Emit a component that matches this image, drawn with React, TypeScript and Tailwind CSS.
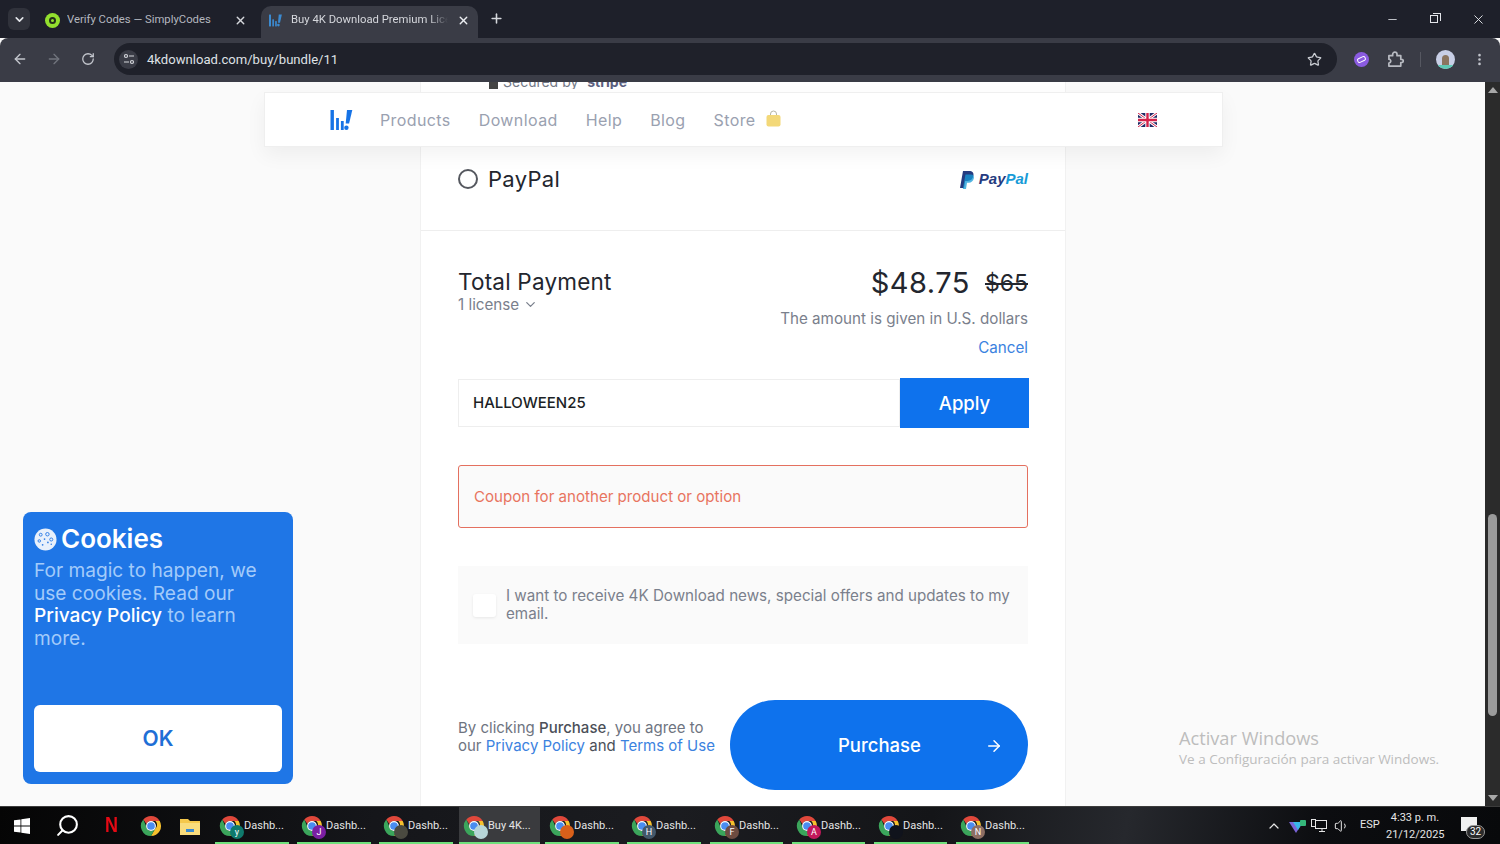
import { ArrowLeft, ArrowRight, ChevronDown, ChevronUp, Minus, MoreVertical, Plus, RotateCw, Search, Star, Volume1, X } from 'lucide-react';

const taskItems = [
    { label: 'Dashb...', badge: 'y', color: 'bg-[#0f7a6c]', ml: 'ml-0', w: 'w-[74px]' },
    { label: 'Dashb...', badge: 'J', color: 'bg-[#7b1fa2]', ml: 'ml-[8px]', w: 'w-[74px]' },
    { label: 'Dashb...', badge: '', color: 'bg-[#4a4a40]', ml: 'ml-[8px]', w: 'w-[74px]' },
    { label: 'Buy 4K...', badge: '', color: 'bg-[#b7d6d8]', ml: 'ml-[6px]', w: 'w-[81px]', active: true },
    { label: 'Dashb...', badge: '', color: 'bg-[#d9601a]', ml: 'ml-[5px]', w: 'w-[74px]' },
    { label: 'Dashb...', badge: 'H', color: 'bg-[#43586b]', ml: 'ml-[8px]', w: 'w-[74px]' },
    { label: 'Dashb...', badge: 'F', color: 'bg-[#6d4c41]', ml: 'ml-[9px]', w: 'w-[73px]' },
    { label: 'Dashb...', badge: 'A', color: 'bg-[#c2185b]', ml: 'ml-[9px]', w: 'w-[73px]' },
    { label: 'Dashb...', badge: '', color: 'bg-[#10131c]', ml: 'ml-[9px]', w: 'w-[73px]' },
    { label: 'Dashb...', badge: 'N', color: 'bg-[#8d6e63]', ml: 'ml-[9px]', w: 'w-[73px]' },
];

function ChromeIcon({ className }: { className?: string }) {
    return (
        <svg viewBox="0 0 24 24" className={className}>
            <path d="M12 1a11 11 0 0 1 9.500 5.500H12a5.500 5.500 0 0 0-5 3.200L3.600 4.900A11 11 0 0 1 12 1z" fill="#e0483b" />
            <path d="M21.500 6.500A11 11 0 0 1 12 23l4.700-8.200a5.500 5.500 0 0 0 0-8.300z" fill="#f6c02d" />
            <path d="M12 23A11 11 0 0 1 3.600 4.900L7.900 15a5.500 5.500 0 0 0 4.500 2.500l4.300-2.700z" fill="#3ba55b" />
            <circle cx="12" cy="12" r="5.400" fill="#fff" />
            <circle cx="12" cy="12" r="4.200" fill="#4a8df0" />
        </svg>
    );
}

function LogoBars({ className, fill }: { className?: string; fill: string }) {
    return (
        <svg viewBox="0 0 22 20" className={className} fill={fill}>
            <rect x="0" y="0" width="3.400" height="20" />
            <rect x="5.600" y="8" width="2.800" height="12" />
            <rect x="10.400" y="11" width="2.800" height="9" />
            <path d="M16.500 0h5.300l-3.200 13.600h-3.400z" />
            <circle cx="15.900" cy="17.800" r="2.200" />
        </svg>
    );
}

function UkFlag() {
    return (
        <svg viewBox="0 0 19 14" className="h-[14px] w-[19px]">
            <rect width="19" height="14" fill="#1f2a66" />
            <path d="M0 0l19 14M19 0L0 14" stroke="#fff" strokeWidth="3" />
            <path d="M0 0l19 14M19 0L0 14" stroke="#d3224a" strokeWidth="1" />
            <path d="M9.500 0v14M0 7h19" stroke="#fff" strokeWidth="4.400" />
            <path d="M9.500 0v14M0 7h19" stroke="#d3224a" strokeWidth="2.400" />
        </svg>
    );
}

function CookieIcon() {
    return (
        <svg viewBox="0 0 24 24" className="h-[23px] w-[23px]">
            <circle cx="12" cy="12" r="11.500" fill="#e8f0fb" />
            <g fill="none" stroke="#2f7de6" strokeWidth="1">
                <circle cx="7" cy="7" r="1.500" />
                <circle cx="14" cy="6.500" r="1.800" />
                <circle cx="18" cy="12" r="1.600" />
                <circle cx="5.500" cy="13.500" r="1.300" />
            </g>
            <g fill="#2f7de6">
                <circle cx="11" cy="11.500" r="0.900" />
                <circle cx="14.500" cy="15" r="0.900" />
                <circle cx="9" cy="17.500" r="0.900" />
                <circle cx="18" cy="17" r="0.800" />
            </g>
        </svg>
    );
}

function TabStrip() {
    return (
        <div className="flex h-[38px] shrink-0 items-end bg-[#1e202a] font-['Roboto',sans-serif] text-[11.3px]">
            <div className="mb-[8px] ml-[8px] flex h-[22px] w-[22px] items-center justify-center rounded-md bg-[#30323b] text-[#e3e5ea]">
                <ChevronDown size={13} strokeWidth={3} />
            </div>
            <div className="flex h-[32px] w-[231px] items-center pb-[4px] pl-[15px] text-[#b4b7bf]">
                <div className="flex h-[15px] w-[15px] items-center justify-center rounded-full bg-[#93e02e]">
                    <div className="h-[7px] w-[7px] rounded-full border-2 border-[#23301a]" />
                </div>
                <span className="ml-[7px] w-[167px] truncate">Verify Codes — SimplyCodes</span>
                <X size={13} strokeWidth={2.500} className="text-[#d5d7dc]" />
            </div>
            <div className="flex h-[32px] w-[217px] items-center rounded-t-[10px] bg-[#3a3c46] pb-[4px] pl-[8px] text-[#d5d7dc]">
                <LogoBars fill="#3b8ad0" className="h-[13px] w-[13px]" />
                <span className="ml-[9px] w-[157px] overflow-hidden whitespace-nowrap [mask-image:linear-gradient(to_right,black_88%,transparent)]">Buy 4K Download Premium Licence</span>
                <X size={13} strokeWidth={2.500} className="ml-[9px] text-[#eceef1]" />
            </div>
            <Plus size={15} strokeWidth={2.500} className="mb-[12px] ml-[11px] text-[#d5d7dc]" />
            <div className="mb-[7px] ml-auto flex h-[24px] items-center text-[#e3e5ea]">
                <div className="flex w-[43px] justify-center">
                    <Minus size={13} strokeWidth={1.500} />
                </div>
                <div className="relative flex w-[43px] justify-center">
                    <div className="mr-[3px] h-[8px] w-[8px] border border-[#e3e5ea]" />
                    <div className="absolute -top-[2px] left-[19px] h-[8px] w-[8px] border-r border-t border-[#e3e5ea]" />
                </div>
                <div className="flex w-[43px] justify-center">
                    <X size={15} strokeWidth={1.500} />
                </div>
            </div>
        </div>
    );
}

function Toolbar() {
    return (
        <div className="flex h-[44px] shrink-0 items-center rounded-t-[8px] bg-[#3a3c46] pb-[2px] font-['Roboto',sans-serif]">
            <ArrowLeft size={16} strokeWidth={2} className="ml-[12px] text-[#c3c6cd]" />
            <ArrowRight size={16} strokeWidth={2} className="ml-[18px] text-[#71747d]" />
            <RotateCw size={14} strokeWidth={2.200} className="ml-[19px] text-[#c3c6cd]" />
            <div className="ml-[19px] flex h-[32px] w-[1223px] items-center rounded-full bg-[#1f212a] pl-[5px] pr-[15px]">
                <div className="flex h-[19px] w-[19px] items-center justify-center rounded-full bg-[#3a3c46]">
                    <svg viewBox="0 0 12 12" className="h-[12px] w-[12px]" fill="none" stroke="#d5d7dc" strokeWidth="1.200">
                        <circle cx="3" cy="3" r="1.500" />
                        <path d="M6 3h5M1 9h5" />
                        <circle cx="9" cy="9" r="1.500" />
                    </svg>
                </div>
                <span className="ml-[9px] pt-[1px] text-[13.1px] text-[#dfe1e6]">4kdownload.com/buy/bundle/11</span>
                <Star size={15} strokeWidth={2} className="ml-auto text-[#c9ccd2]" />
            </div>
            <div className="ml-[17px] flex h-[15px] w-[15px] items-center justify-center rounded-full bg-[#8a5be0]">
                <div className="h-[5px] w-[9px] -rotate-[25deg] rounded-[2px] border border-white" />
            </div>
            <svg viewBox="0 0 18 18" className="ml-[18px] h-[17px] w-[17px]" fill="none" stroke="#b8bbc2" strokeWidth="1.800" strokeLinejoin="round">
                <path d="M2 5h4V3.500a2.300 2.300 0 0 1 4.600 0V5h4v3.800h.9a1.700 1.700 0 0 1 0 3.400h-.9V16H2v-3.300a2 2 0 0 0 0-4z" />
            </svg>
            <div className="ml-[16px] h-[15px] w-px bg-[#565861]" />
            <div className="relative ml-[15px] flex h-[19px] w-[19px] items-end justify-center overflow-hidden rounded-full bg-[#c8cfe6]">
                <div className="mb-[2px] h-[12px] w-[7px] rounded-t-full bg-[#8a7560]" />
                <div className="absolute bottom-0 h-[4px] w-[19px] bg-[#5fc9b5]" />
            </div>
            <MoreVertical size={15} strokeWidth={2.200} className="ml-[17px] text-[#c3c6cd]" />
        </div>
    );
}

function SiteHeader() {
    return (
        <div className="absolute left-[264px] top-[10px] flex h-[55px] w-[959px] items-center border border-[#efefef] bg-white pl-[65px] pr-[65px] text-[16px] tracking-[0.4px] text-[#9aa1b0] shadow-[0_8px_20px_rgba(0,0,0,0.05)]">
            <LogoBars fill="#1673e6" className="h-[20px] w-[23px]" />
            <div className="ml-[27px] flex items-center gap-[28px] pt-[1px]">
                <span>Products</span>
                <span>Download</span>
                <span>Help</span>
                <span>Blog</span>
                <span className="flex items-center">
                    Store
                    <svg viewBox="0 0 15 17" className="mb-[3px] ml-[10px] h-[17px] w-[15px]">
                        <path d="M4.500 6V4a3 3 0 0 1 6 0v2" fill="none" stroke="#b5b5a5" strokeWidth="1" />
                        <rect x="0.500" y="5" width="14" height="11.500" rx="2" fill="#f3d878" />
                    </svg>
                </span>
            </div>
            <div className="ml-auto">
                <UkFlag />
            </div>
        </div>
    );
}

function CookieBanner() {
    return (
        <div className="absolute left-[23px] top-[430px] flex h-[272px] w-[270px] flex-col rounded-lg bg-[#1f76e6] px-[11px] pb-[12px] pt-[11px]">
            <div className="flex items-center gap-[4px] text-[26px] font-semibold leading-[32px] text-white">
                <CookieIcon />
                Cookies
            </div>
            <p className="mt-[4px] text-[19.100px] leading-[22.500px] text-[#a3cbfa]">
                For magic to happen, we use cookies. Read our <span className="font-medium text-white">Privacy Policy</span> to learn more.
            </p>
            <div className="mt-auto flex h-[67px] items-center justify-center rounded-md bg-white text-[21px] font-semibold text-[#1f6fd6]">OK</div>
        </div>
    );
}

function Checkout() {
    return (
        <div className="ml-[420px] h-full w-[646px] overflow-hidden border-x border-[#f1f1f1] bg-white">
            <div className="h-[149px] border-b border-[#eeeeee] px-[37px]">
                <div className="flex h-[7px] items-start overflow-hidden pl-[31px] text-[14px] leading-[14px] text-[#747a88]">
                    <span className="mr-[5px] h-[7px] w-[9px] shrink-0 bg-[#444]" />
                    <span className="-mt-[7px]">Secured by <b className="ml-[5px] text-[#5b5f80]">stripe</b></span>
                </div>
                <div className="mt-[78px] flex h-[24px] items-center">
                    <div className="h-[20px] w-[20px] rounded-full border-2 border-[#55585f]" />
                    <span className="ml-[10px] text-[22px] tracking-[0.3px] text-[#23262e]">PayPal</span>
                    <span className="ml-auto flex items-center pt-[1px] font-['Liberation_Sans',sans-serif] text-[15px] font-bold italic">
                        <svg viewBox="0 0 14 18" className="mr-[5px] h-[18px] w-[14px]">
                            <path d="M3 0h6c3.500 0 5 2 4.400 4.800C12.700 8.200 10.500 10 7.500 10H5.200L4 17H0z" fill="#253b80" />
                            <path d="M5.500 3.500h5.500c2.500 0 3.300 1.800 2.800 4-.6 2.700-2.600 4.200-5 4.200H7L6 18H2.800z" fill="#179bd7" opacity="0.750" />
                        </svg>
                        <span className="text-[#253b80]">Pay</span>
                        <span className="text-[#179bd7]">Pal</span>
                    </span>
                </div>
            </div>
            <div className="px-[37px] pt-[31px]">
                <div className="flex justify-between">
                    <div className="pt-[6px]">
                        <div className="text-[22.500px] leading-[28px] tracking-[0.2px] text-[#23262e]">Total Payment</div>
                        <div className="flex items-center text-[15.200px] leading-[17px] text-[#7a808c]">
                            1 license
                            <ChevronDown size={15} strokeWidth={2} className="ml-[4px]" />
                        </div>
                    </div>
                    <div className="text-right">
                        <div className="flex h-[42px] items-center justify-end">
                            <span className="text-[29px] tracking-[0.5px] text-[#23262e]">$48.75</span>
                            <span className="ml-[15px] text-[23px] text-[#23262e] line-through">$65</span>
                        </div>
                        <div className="mt-[5px] text-[15.200px] leading-[20px] text-[#7a808c]">The amount is given in U.S. dollars</div>
                        <div className="mt-[9px] text-[15.200px] leading-[20px] text-[#3b82e0]">Cancel</div>
                    </div>
                </div>
                <div className="-mr-px mt-[20px] flex h-[50px] items-center">
                    <div className="flex h-[48px] w-[442px] items-center border border-[#eeeeee] pl-[14px] pt-[1px] text-[15px] font-medium text-[#1c1f26]">HALLOWEEN25</div>
                    <div className="flex h-[50px] flex-1 items-center justify-center bg-[#0e72ed] pt-[1px] text-[18.500px] font-medium text-white">Apply</div>
                </div>
                <div className="mt-[37px] flex h-[63px] items-center rounded-[3px] border border-[#e4705f] bg-[#fafafa] pl-[15px] pt-[1px] text-[15.100px] text-[#e8745f]">Coupon for another product or option</div>
                <div className="mt-[38px] flex h-[78px] items-center bg-[#fafafa] pl-[15px] pr-[15px]">
                    <div className="h-[23px] w-[23px] shrink-0 rounded-[3px] bg-white shadow-[0_1px_3px_rgba(0,0,0,0.08)]" />
                    <p className="ml-[10px] text-[15.200px] leading-[18px] text-[#7a808c]">I want to receive 4K Download news, special offers and updates to my email.</p>
                </div>
                <div className="mt-[56px] flex h-[90px] items-center">
                    <p className="mb-[16px] w-[272px] shrink-0 pr-[6px] text-[15px] leading-[18px] text-[#6e7480]">
                        By clicking <span className="font-medium text-[#4b4f58]">Purchase</span>, you agree to our <span className="text-[#3b82e0]">Privacy Policy</span> <span className="text-[#4b4f58]">and</span> <span className="text-[#3b82e0]">Terms of Use</span>
                    </p>
                    <div className="flex h-[90px] flex-1 items-center rounded-full bg-[#0e72ed] pl-[108px] pr-[25px] pt-[1px] text-[18.500px] font-medium text-white">
                        Purchase
                        <ArrowRight size={18} strokeWidth={2} className="ml-auto" />
                    </div>
                </div>
            </div>
        </div>
    );
}

function Taskbar() {
    return (
        <div className="flex h-[38px] shrink-0 items-center border-t border-[#3c3c3c] bg-[linear-gradient(100deg,#050505_0%,#15161a_25%,#1b1c20_45%,#141518_62%,#26282d_75%,#0c0d10_88%,#08090b_100%)] font-['Roboto',sans-serif] text-[11px] text-[#e6e6e6]">
            <svg viewBox="0 0 16 16" className="ml-[14px] h-[16px] w-[16px]" fill="#fff">
                <path d="M0 2.300L6.500 1.400V7.600H0zM7.300 1.300L16 0V7.600H7.300zM0 8.400H6.500V14.600L0 13.700zM7.300 8.400H16V16L7.300 14.700z" />
            </svg>
            <Search size={25} strokeWidth={2} className="ml-[25px] -scale-x-100 text-white" />
            <span className="ml-[25px] w-[14px] scale-y-125 font-['Liberation_Sans',sans-serif] text-[18px] font-bold text-[#e50914]">N</span>
            <ChromeIcon className="ml-[21px] h-[22px] w-[22px]" />
            <svg viewBox="0 0 20 18" className="ml-[18px] h-[18px] w-[20px]">
                <path d="M0 2h8l2 2h10v14H0z" fill="#f5c84b" />
                <rect x="0" y="6" width="20" height="12" fill="#f9dc7c" />
                <rect x="6" y="12" width="8" height="3" fill="#3a8ad0" />
            </svg>
            <div className="ml-[15px] flex h-[37px] items-stretch">
                {taskItems.map((item, i) => (
                    <div key={i} className={`${item.ml} ${item.w} flex items-center border-b-2 border-[#6fe07c] pl-[4px] pt-[3px] ${item.active ? 'bg-[#3a3b3e]' : ''}`}>
                        <div className="relative h-[22px] w-[22px] shrink-0">
                            <ChromeIcon className="h-[22px] w-[22px]" />
                            <div className={`absolute -bottom-[2px] -right-[3px] flex h-[14px] w-[14px] items-center justify-center rounded-full text-[9px] leading-none text-white ${item.color}`}>{item.badge}</div>
                        </div>
                        <span className="ml-[3px] whitespace-nowrap">{item.label}</span>
                    </div>
                ))}
            </div>
            <ChevronUp size={16} strokeWidth={1.800} className="ml-[237px]" />
            <svg viewBox="0 0 18 16" className="ml-[7px] h-[16px] w-[18px]">
                <path d="M0 4h14l-7 11z" fill="#7a63d8" />
                <path d="M4 4h10l-5 8z" fill="#38b6e8" />
                <rect x="11" y="2" width="6" height="6" rx="1" fill="#34b67a" />
            </svg>
            <svg viewBox="0 0 16 14" className="ml-[4px] h-[14px] w-[16px]" fill="none" stroke="#e6e6e6" strokeWidth="1">
                <rect x="4.500" y="1.500" width="11" height="8" />
                <rect x="0.500" y="0.500" width="4" height="7" />
                <path d="M8 12.500h6M11 9.500v3" />
            </svg>
            <Volume1 size={16} strokeWidth={1.500} className="ml-[7px]" />
            <span className="ml-[10px] w-[18px]">ESP</span>
            <div className="ml-[8px] w-[58px] text-center leading-[17px]">
                <div>4:33 p. m.</div>
                <div className="whitespace-nowrap">21/12/2025</div>
            </div>
            <div className="relative ml-[17px] h-[18px] w-[16px]">
                <div className="h-[14px] w-[16px] bg-[#f0f0f0]" />
                <div className="absolute -bottom-[4px] left-[5px] flex h-[14px] w-[19px] items-center justify-center rounded-full border border-[#999] bg-[#2a2a2a] text-[10px] text-white">32</div>
            </div>
        </div>
    );
}

export default function App() {
    return (
        <div className="flex h-[844px] w-[1500px] flex-col overflow-hidden bg-[#fafafa] font-['Inter',sans-serif]">
            <TabStrip />
            <Toolbar />
            <div className="relative flex min-h-0 flex-1">
                <div className="min-w-0 flex-1">
                    <Checkout />
                </div>
                {/* page scrollbar */}
                <div className="flex w-[15px] flex-col items-center justify-between bg-[#2b2b2b] py-[5px]">
                    <div className="h-0 w-0 border-x-[5px] border-b-[6px] border-x-transparent border-b-[#a8a8a8]" />
                    <div className="mb-[79px] mt-auto h-[202px] w-[9px] rounded-full bg-[#9b9b9b]" />
                    <div className="h-0 w-0 border-x-[5px] border-t-[6px] border-x-transparent border-t-[#a8a8a8]" />
                </div>
                <SiteHeader />
                <CookieBanner />
                <div className="absolute left-[1179px] top-[644px] font-['Open_Sans',sans-serif] text-[#bdbdbd]">
                    <div className="text-[18.200px] leading-[24px]">Activar Windows</div>
                    <div className="text-[13.500px] leading-[19px]">Ve a Configuración para activar Windows.</div>
                </div>
            </div>
            <Taskbar />
        </div>
    );
}
